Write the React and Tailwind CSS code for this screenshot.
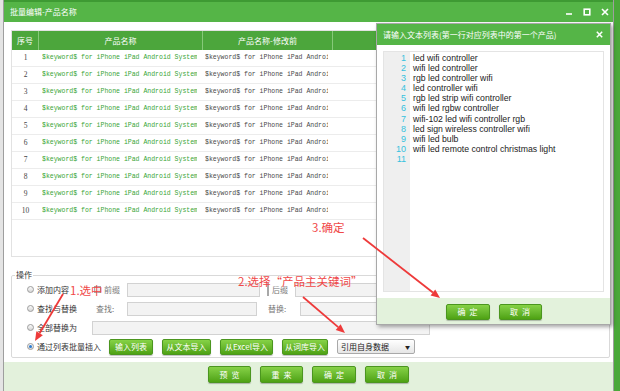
import React from 'react';

const cjk = { fontFamily: '"Noto Sans CJK SC", "Liberation Sans", sans-serif' };

const rows = [1, 2, 3, 4, 5, 6, 7, 8, 9, 10];

const keywords = [
    'led wifi controller',
    'wifi led controller',
    'rgb led controller wifi',
    'led controller wifi',
    'rgb led strip wifi controller',
    'wifi led rgbw controller',
    'wifi-102 led wifi controller rgb',
    'led sign wireless controller wifi',
    'wifi led bulb',
    'wifi led remote control christmas light',
    '',
];

// Small radio button
const Radio = ({ checked }) => (
    <span className="w-[7px] h-[7px] rounded-full border border-[#9c9c9c] bg-linear-to-b from-[#fafafa] to-[#d6d6d6] flex items-center justify-center shrink-0">
        {checked && <span className="w-[3px] h-[3px] rounded-full bg-[#2b7bd0]" />}
    </span>
);

const Check = () => (
    <span className="w-[7px] h-[7px] border border-[#a8a8a8] bg-linear-to-b from-[#fafafa] to-[#dedede] shrink-0" />
);

const Input = ({ className }) => (
    <div className={`h-[14px] border border-[#d2d2d2] bg-[#f3f3f3] ${className}`} />
);

// Green gradient button
const GreenBtn = ({ children, className }) => (
    <div
        className={`flex items-center justify-center rounded-[2px] border border-[#4b961f] bg-linear-to-b from-[#86d246] to-[#4ea212] text-white text-[8px] leading-none shadow-[0_1px_1px_rgba(0,0,0,0.25)] ${className}`}
        style={cjk}
    >
        {children}
    </div>
);

// Red annotation arrow
const Arrow = ({ x1, y1, x2, y2 }) => {
    const dx = x2 - x1;
    const dy = y2 - y1;
    const len = Math.sqrt(dx * dx + dy * dy);
    const ux = dx / len;
    const uy = dy / len;
    const bx = x2 - ux * 9;
    const by = y2 - uy * 9;
    const nx = -uy * 3.8;
    const ny = ux * 3.8;
    return (
        <g>
            <line x1={x1} y1={y1} x2={bx} y2={by} stroke="#ee3a3a" strokeWidth="1.8" />
            <polygon points={`${x2},${y2} ${bx + nx},${by + ny} ${bx - nx},${by - ny}`} fill="#ee3a3a" />
        </g>
    );
};

const App = () => {
    return (
        <div className="relative w-[620px] h-[391px] overflow-hidden flex bg-[#e9e9e9]">
            {/* left strip of the window behind */}
            <div className="w-[3px] h-full bg-[#e4e4e4]" />

            {/* Main window */}
            <div className="w-[611px] h-full flex flex-col border-x border-[#9e9e9e] bg-white">
                <div className="h-[22px] shrink-0 bg-[#55b547] border-t-2 border-[#3e9a33] flex items-center pl-[6px] pr-[4px]">
                    <span className="text-white text-[8px]" style={cjk}>批量编辑-产品名称</span>
                    <div className="ml-auto flex items-center gap-[10px]">
                        <svg width="8" height="8" viewBox="0 0 8 8"><line x1="1" y1="6" x2="7" y2="6" stroke="white" strokeWidth="1.6" /></svg>
                        <svg width="8" height="8" viewBox="0 0 8 8"><rect x="1.2" y="1.2" width="5.6" height="5.6" fill="none" stroke="white" strokeWidth="1.6" /></svg>
                        <svg width="8" height="8" viewBox="0 0 8 8"><path d="M1 1 L7 7 M7 1 L1 7" stroke="white" strokeWidth="1.6" /></svg>
                    </div>
                </div>

                <div className="flex-1 flex flex-col">
                    {/* Table */}
                    <div className="mt-[8px] ml-[7px] mr-[3px] h-[227px] border border-[#e2e2e2] flex flex-col">
                        <div className="h-[19px] flex bg-[#4ca63c] text-white text-[8px]" style={cjk}>
                            <div className="w-[27px] flex items-center justify-center border-r border-[#86c979]">序号</div>
                            <div className="w-[164px] flex items-center justify-center border-r border-[#86c979]">产品名称</div>
                            <div className="w-[130px] flex items-center justify-center border-r border-[#86c979]">产品名称-修改前</div>
                            <div className="flex-1" />
                        </div>
                        {rows.map((n) => (
                            <div key={n} className="h-[17px] flex items-center border-b border-[#ececec]">
                                <div className="w-[27px] text-center text-[7.5px] text-[#444]" style={{ fontFamily: '"Liberation Serif", serif' }}>
                                    {n}
                                </div>
                                <div className="w-[164px] pl-[3px]">
                                    <div className="w-[155px] overflow-hidden whitespace-nowrap text-[6.5px] text-[#3aa536]" style={{ fontFamily: '"Liberation Mono", monospace' }}>
                                        $keyword$ for iPhone iPad Android System
                                    </div>
                                </div>
                                <div className="w-[130px] pl-[2px]">
                                    <div className="w-[123px] overflow-hidden whitespace-nowrap text-[6.5px] text-[#4a4a4a]" style={{ fontFamily: '"Liberation Mono", monospace' }}>
                                        $keyword$ for iPhone iPad Android System
                                    </div>
                                </div>
                            </div>
                        ))}
                    </div>

                    {/* Operations */}
                    <fieldset className="mt-[13px] ml-[7px] mr-[3px] border border-[#d9d9d9] rounded-[2px] pb-[1px] text-[8px] text-[#333]" style={cjk}>
                        <legend className="ml-[3px] px-[1px] leading-[10px] text-[#333]">操作</legend>
                        <div className="h-[19px] flex items-center pl-[15px]">
                            <Radio />
                            <span className="ml-[3px] w-[57px]">添加内容</span>
                            <Check />
                            <span className="ml-[3px] w-[23px] text-[#777]">前缀</span>
                            <Input className="w-[133px]" />
                            <span className="ml-[7px]"><Check /></span>
                            <span className="ml-[3px] w-[23px] text-[#777]">后缀</span>
                            <Input className="flex-1 mr-[8px]" />
                        </div>
                        <div className="h-[19px] flex items-center pl-[15px]">
                            <Radio />
                            <span className="ml-[3px] w-[59px]">查找与替换</span>
                            <span className="w-[31px] text-[#777]">查找:</span>
                            <Input className="w-[130px]" />
                            <span className="ml-[11px] w-[32px] text-[#777]">替换:</span>
                            <Input className="flex-1 mr-[8px]" />
                        </div>
                        <div className="h-[19px] flex items-center pl-[15px]">
                            <Radio />
                            <span className="ml-[3px] w-[55px]">全部替换为</span>
                            <Input className="w-[338px]" />
                        </div>
                        <div className="h-[19px] flex items-center pl-[15px]">
                            <Radio checked />
                            <span className="ml-[3px] w-[72px]">通过列表批量插入</span>
                            <GreenBtn className="w-[44px] h-[16px]">输入列表</GreenBtn>
                            <GreenBtn className="ml-[9px] w-[49px] h-[16px]">从文本导入</GreenBtn>
                            <GreenBtn className="ml-[9px] w-[53px] h-[16px]">从Excel导入</GreenBtn>
                            <GreenBtn className="ml-[9px] w-[46px] h-[16px]">从词库导入</GreenBtn>
                            <div className="ml-[9px] w-[78px] h-[15px] border border-[#a9a9a9] rounded-[2px] bg-linear-to-b from-[#ffffff] to-[#e6e6e6] flex items-center pl-[3px] pr-[4px] text-[#222]">
                                <span>引用自身数据</span>
                                <span className="ml-auto text-[5px]">▼</span>
                            </div>
                        </div>
                    </fieldset>

                    {/* Footer */}
                    <div className="mt-[4px] flex-1 bg-[#e3f1dc] flex justify-center gap-[9px] pt-[4px]">
                        <GreenBtn className="w-[43px] h-[17px] tracking-[4px] pl-[4px]">预览</GreenBtn>
                        <GreenBtn className="w-[43px] h-[17px] tracking-[4px] pl-[4px]">重来</GreenBtn>
                        <GreenBtn className="w-[44px] h-[17px] tracking-[4px] pl-[4px]">确定</GreenBtn>
                        <GreenBtn className="w-[44px] h-[17px] tracking-[4px] pl-[4px]">取消</GreenBtn>
                    </div>
                </div>
            </div>

            {/* right strip of the window behind */}
            <div className="w-[6px] h-full bg-[#4aa83a]" />

            {/* Popup dialog */}
            <div className="absolute left-[376px] top-[23px] w-[235px] h-[302px] flex flex-col bg-white border border-[#a8a8a8] shadow-[2px_2px_4px_rgba(0,0,0,0.35)]">
                <div className="h-[21px] shrink-0 bg-[#55b547] flex items-center pl-[6px] pr-[7px]">
                    <span className="text-white text-[8px]" style={cjk}>请输入文本列表(第一行对应列表中的第一个产品)</span>
                    <svg className="ml-auto" width="7" height="7" viewBox="0 0 7 7"><path d="M0.8 0.8 L6.2 6.2 M6.2 0.8 L0.8 6.2" stroke="white" strokeWidth="1.5" /></svg>
                </div>
                <div className="mt-[6px] mx-[6px] h-[241px] border border-[#e4e4e4] flex">
                    <div className="w-[26px] bg-[#efefef] pt-[1px] pr-[4px] text-right text-[9px] leading-[10.1px] text-[#35c1de]" style={{ fontFamily: '"Liberation Sans", sans-serif' }}>
                        {keywords.map((_, i) => (
                            <div key={i} className="h-[10.1px]">{i + 1}</div>
                        ))}
                    </div>
                    <div className="flex-1 pl-[3px] pt-[1px] text-[8.7px] leading-[10.1px] text-[#222]" style={{ fontFamily: '"Liberation Sans", sans-serif' }}>
                        {keywords.map((k, i) => (
                            <div key={i} className="whitespace-nowrap h-[10.1px]">{k}</div>
                        ))}
                    </div>
                </div>
                <div className="mt-[6px] flex-1 bg-[#e3f2dc] flex justify-center gap-[9px] pt-[6px]">
                    <GreenBtn className="w-[44px] h-[16px] tracking-[4px] pl-[4px]">确定</GreenBtn>
                    <GreenBtn className="w-[43px] h-[16px] tracking-[4px] pl-[4px]">取消</GreenBtn>
                </div>
            </div>

            {/* Annotations */}
            <svg className="absolute left-0 top-0 pointer-events-none" width="620" height="391">
                <Arrow x1={63} y1={294} x2={35} y2={341} />
                <Arrow x1={303} y1={297} x2={345} y2={333} />
                <Arrow x1={363} y1={238} x2={440} y2={298} />
            </svg>
            <div className="absolute left-[70px] top-[285px] text-[11.5px] leading-none text-[#f04848]" style={cjk}>1.选中</div>
            <div className="absolute left-[238px] top-[276px] text-[11.5px] leading-none text-[#f04848]" style={cjk}>2.选择“产品主关键词”</div>
            <div className="absolute left-[312px] top-[222px] text-[11.5px] leading-none text-[#f04848]" style={cjk}>3.确定</div>
        </div>
    );
};

export default App;
